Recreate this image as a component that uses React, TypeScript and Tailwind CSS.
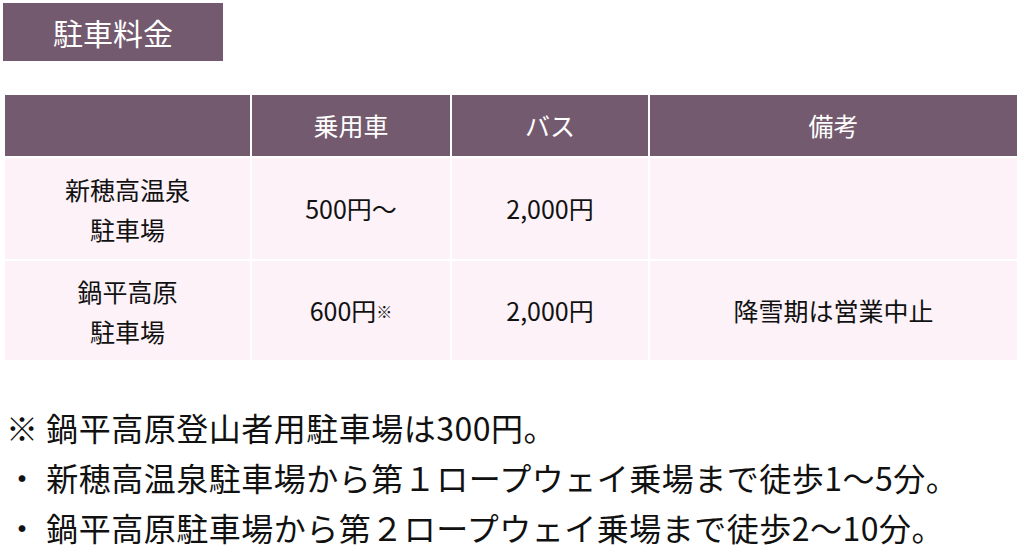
import { Fragment } from "react";

const rows = [
  { name: ["新穂高温泉", "駐車場"], car: "500円～", carMark: "", bus: "2,000円", note: "" },
  { name: ["鍋平高原", "駐車場"], car: "600円", carMark: "※", bus: "2,000円", note: "降雪期は営業中止" },
];

const App = () => {
  return (
    <div className="w-[1024px] h-[553px] overflow-hidden bg-white text-[#111] font-['Noto_Sans_CJK_JP','Noto_Sans',sans-serif]">
      {/* Title */}
      <div className="pt-[3px] pl-[3px]">
        <div className="w-[220px] h-[58px] bg-[#735a6e] text-white text-[30px] flex items-center justify-center">
          駐車料金
        </div>
      </div>

      {/* Fee table */}
      <div className="mt-[34px] ml-[5px] w-max grid grid-cols-[245px_198px_196px_367px] grid-rows-[61px_101px_99px] gap-[2px] text-[25px]">
        <div className="bg-[#735a6e]" />
        <div className="bg-[#735a6e] text-white flex items-center justify-center">乗用車</div>
        <div className="bg-[#735a6e] text-white flex items-center justify-center">バス</div>
        <div className="bg-[#735a6e] text-white flex items-center justify-center">備考</div>

        {rows.map((r) => (
          <Fragment key={r.name[0]}>
            <div className="bg-[#fcf2f8] flex flex-col items-center justify-center leading-[40px]">
              <span>{r.name[0]}</span>
              <span>{r.name[1]}</span>
            </div>
            <div className="bg-[#fcf2f8] flex items-center justify-center">
              {r.car}
              {r.carMark && <span className="text-[16px]">{r.carMark}</span>}
            </div>
            <div className="bg-[#fcf2f8] flex items-center justify-center">{r.bus}</div>
            <div className="bg-[#fcf2f8] flex items-center justify-center">{r.note}</div>
          </Fragment>
        ))}
      </div>

      {/* Notes */}
      <div className="mt-[42px] pl-[6px] text-[32px] leading-[50px] tracking-[0.5px] whitespace-nowrap">
        <p>※ 鍋平高原登山者用駐車場は300円。</p>
        <p>・ 新穂高温泉駐車場から第１ロープウェイ乗場まで徒歩1～5分。</p>
        <p>・ 鍋平高原駐車場から第２ロープウェイ乗場まで徒歩2～10分。</p>
      </div>
    </div>
  );
};

export default App;
